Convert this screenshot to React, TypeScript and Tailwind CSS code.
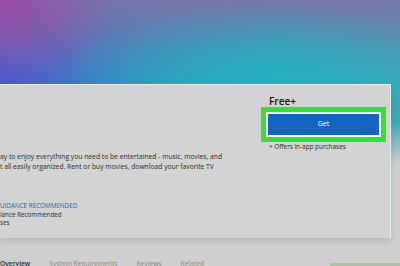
import React from 'react'

const tabs = [
  { label: 'Overview', active: true },
  { label: 'System Requirements', active: false },
  { label: 'Reviews', active: false },
  { label: 'Related', active: false },
]

const App: React.FC = () => {
  return (
    <div
      className="w-[400px] h-[266px] overflow-hidden bg-[linear-gradient(to_bottom,transparent_46%,#cfcfcf_62%),radial-gradient(ellipse_120px_80px_at_0%_0%,#9a4aa8,transparent),radial-gradient(ellipse_55%_32%_at_66%_34%,#22b2c0,rgba(34,178,192,0.5)_50%,transparent),linear-gradient(to_bottom,#7676a6,rgba(110,120,170,0)_28%),linear-gradient(to_right,#5058cc,#3d86c0_35%,#35a8bc_70%,#4aa4b6)]"
      style={{ fontFamily: '"Open Sans", "Noto Sans", sans-serif' }}
    >
      <div className="pt-[84px]">
        <div className="w-[391px] h-[154px] bg-[#d3d3d3] border-t border-r border-[#e6eef0] shadow-[0_3px_6px_rgba(0,0,0,0.12)] flex">
          <div className="w-[261px] pt-[67px] text-[6.75px] text-[#2c2c2c]">
            <p className="leading-[9.6px] whitespace-nowrap">
              ay to enjoy everything you need to be entertained - music, movies, and
              <br />
              t all easily organized. Rent or buy movies, download your favorite TV
            </p>
            <div className="mt-[31px] leading-[8.6px] whitespace-nowrap text-[6.3px]">
              <p className="text-[#3d5c98]">UIDANCE RECOMMENDED</p>
              <p>lance Recommended</p>
              <p>ses</p>
            </div>
          </div>
          <div className="pt-[10px]">
            <div className="pl-[8px] text-[10px] font-semibold text-[#161616] leading-[12px]">Free+</div>
            <div className="w-[125px] h-[35px] border-[5px] border-[#33e033] bg-white p-[2px]">
              <button className="w-full h-full bg-[#1565c0] text-white text-[7px] flex items-center justify-center">
                Get
              </button>
            </div>
            <div className="pl-[8px] mt-[1px] text-[6.4px] text-[#2a2a2a] leading-[8px]">+ Offers in-app purchases</div>
          </div>
        </div>
        <div className="mt-[21px] flex items-start justify-between">
          <div className="flex gap-[19px] text-[6.7px] text-[#8a8a8a] leading-[9px] whitespace-nowrap">
            {tabs.map((t) => (
              <span key={t.label} className={t.active ? 'text-[#333] font-semibold' : ''}>
                {t.label}
              </span>
            ))}
          </div>
          <div className="w-[70px] h-[6px] mt-[4px] bg-[#a9c4a0]" />
        </div>
      </div>
    </div>
  )
}

export default App
